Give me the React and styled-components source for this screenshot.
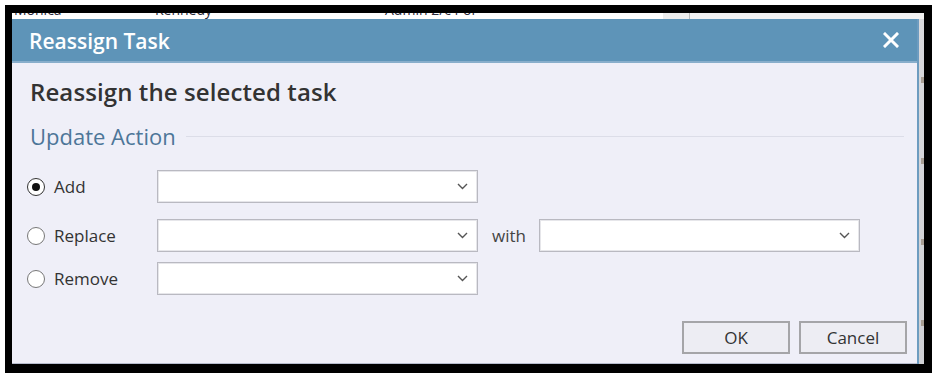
import React from "react";
import styled, { createGlobalStyle } from "styled-components";

const GlobalStyle = createGlobalStyle`
  html, body {
    margin: 0;
    padding: 0;
    background: #ffffff;
  }
  body {
    font-family: "Open Sans", "Noto Sans", "Liberation Sans", sans-serif;
  }
`;

const FONT = `"Open Sans", "Noto Sans", "Liberation Sans", sans-serif`;

const Frame = styled.div`
  box-sizing: border-box;
  margin: 5px 0 0 5px;
  width: 927px;
  height: 368px;
  border-style: solid;
  border-color: #000;
  border-width: 8px 8px 9px 7px;
  display: flex;
  flex-direction: column;
  overflow: hidden;
`;

const AppStrip = styled.div`
  height: 6px;
  flex: none;
  display: flex;
  overflow: hidden;
  background: #ffffff;
`;

const StripCell = styled.div`
  width: ${p => p.$w}px;
  flex: none;
  height: 6px;
  overflow: hidden;
  background: ${p => p.$bg || "#fff"};
  border-right: ${p => (p.$line ? "1px solid #b9b9b9" : "none")};
  padding-left: 2px;
  font-family: ${FONT};
  font-size: 14px;
  line-height: 16px;
  color: #2a2a3a;
  box-sizing: border-box;

  span {
    display: block;
    margin-top: -11px;
    white-space: nowrap;
  }
`;

const Stage = styled.div`
  flex: 1;
  display: flex;
  min-height: 0;
`;

const BackEdge = styled.div`
  flex: 1;
  background: linear-gradient(#d9d9dc, #cfd0d4);
  display: flex;
  flex-direction: column;
  justify-content: space-around;
  padding-top: 20px;

  i {
    display: block;
    height: 6px;
    margin-left: 2px;
    background: #8a7a66;
    opacity: 0.6;
  }
`;

const Dialog = styled.div`
  width: 907px;
  flex: none;
  display: flex;
  flex-direction: column;
  background: #efeff8;
  border-right: 2px solid #6d9cc0;
  box-sizing: border-box;
`;

const Header = styled.div`
  height: 44px;
  flex: none;
  background: #5e94b8;
  border-bottom: 2px solid #88aecb;
  box-sizing: border-box;
  display: flex;
  align-items: center;
  justify-content: space-between;
  padding: 0 18px 0 17px;
`;

const Title = styled.div`
  color: #fff;
  font-family: ${FONT};
  font-weight: 600;
  font-size: 21px;
  line-height: 26px;
  margin-top: 1px;
`;

const CloseButton = styled.button`
  border: none;
  background: none;
  padding: 0;
  width: 16px;
  height: 16px;
  display: flex;
  cursor: pointer;
`;

const Body = styled.div`
  flex: 1;
  display: flex;
  flex-direction: column;
  padding: 15px 10px 9px 18px;
  border-bottom: 1px solid #b7bccd;
`;

const Subtitle = styled.div`
  font-family: ${FONT};
  font-weight: 600;
  font-size: 24px;
  letter-spacing: 0.1px;
  line-height: 28px;
  color: #333;
`;

const Legend = styled.div`
  margin-top: 16px;
  display: flex;
  align-items: center;
  gap: 10px;
  font-family: ${FONT};
  font-size: 22px;
  line-height: 28px;
  color: #4d7698;

  &::after {
    content: "";
    flex: 1;
    height: 1px;
    background: #dcdde8;
    margin-right: 3px;
  }
`;

const Row = styled.div`
  display: flex;
  align-items: center;
  margin-top: ${p => p.$gap}px;
  height: 33px;
`;

const RadioLabel = styled.label`
  width: 127px;
  flex: none;
  display: flex;
  align-items: center;
  gap: 9px;
  font-family: ${FONT};
  font-size: 17px;
  color: #333;
  cursor: pointer;
`;

const RadioCircle = styled.span`
  width: 16px;
  height: 16px;
  margin-left: -3px;
  border-radius: 50%;
  border: 1px solid ${p => (p.$on ? "#333" : "#777")};
  background: #fff;
  display: flex;
  align-items: center;
  justify-content: center;

  &::after {
    content: "";
    width: 8px;
    height: 8px;
    border-radius: 50%;
    background: #111;
    display: ${p => (p.$on ? "block" : "none")};
  }
`;

const Select = styled.div`
  width: ${p => p.$w}px;
  height: 33px;
  box-sizing: border-box;
  background: #fff;
  border: 1px solid #b9b9c1;
  box-shadow: inset 0 0 0 1px #e6e6ea;
  display: flex;
  align-items: center;
  justify-content: flex-end;
  padding-right: 9px;
`;

const WithLabel = styled.span`
  font-family: ${FONT};
  font-size: 17px;
  color: #444;
  margin: 0 13px 0 14px;
`;

const Footer = styled.div`
  margin-top: auto;
  display: flex;
  justify-content: flex-end;
  gap: 9px;
`;

const Button = styled.button`
  width: 108px;
  height: 33px;
  box-sizing: border-box;
  background: #ededf3;
  border: 2px solid #a5a5a8;
  font-family: ${FONT};
  font-size: 17px;
  color: #333;
  padding: 0;
  cursor: pointer;
`;

const Chevron = () => (
  <svg width="11" height="7" viewBox="0 0 11 7">
    <path d="M1 1 L5.5 5.5 L10 1" fill="none" stroke="#555" strokeWidth="1.4" />
  </svg>
);

const CloseIcon = () => (
  <svg width="16" height="16" viewBox="0 0 16 16">
    <path d="M2 2 L14 14 M14 2 L2 14" stroke="#fff" strokeWidth="3" strokeLinecap="square" />
  </svg>
);

const ROWS = [
  { key: "add", label: "Add", gap: 20, on: true },
  { key: "replace", label: "Replace", gap: 16, with: true },
  { key: "remove", label: "Remove", gap: 10 },
];

export default function App() {
  return (
    <>
      <GlobalStyle />
      <Frame>
        <AppStrip>
          <StripCell $w={141}><span>Monica</span></StripCell>
          <StripCell $w={230}><span>Kennedy</span></StripCell>
          <StripCell $w={280}><span>Admin 2/c Pol</span></StripCell>
          <StripCell $w={27} $bg="#ececec" $line />
          <StripCell $w={234} $bg="#f2f2f2" />
        </AppStrip>
        <Stage>
          <Dialog>
            <Header>
              <Title>Reassign Task</Title>
              <CloseButton aria-label="Close"><CloseIcon /></CloseButton>
            </Header>
            <Body>
              <Subtitle>Reassign the selected task</Subtitle>
              <Legend>Update Action</Legend>
              {ROWS.map(r => (
                <Row key={r.key} $gap={r.gap}>
                  <RadioLabel>
                    <RadioCircle $on={r.on} />
                    {r.label}
                  </RadioLabel>
                  <Select $w={321}><Chevron /></Select>
                  {r.with && (
                    <>
                      <WithLabel>with</WithLabel>
                      <Select $w={321}><Chevron /></Select>
                    </>
                  )}
                </Row>
              ))}
              <Footer>
                <Button>OK</Button>
                <Button>Cancel</Button>
              </Footer>
            </Body>
          </Dialog>
          <BackEdge>
            <i /><i /><i /><i />
          </BackEdge>
        </Stage>
      </Frame>
    </>
  );
}
